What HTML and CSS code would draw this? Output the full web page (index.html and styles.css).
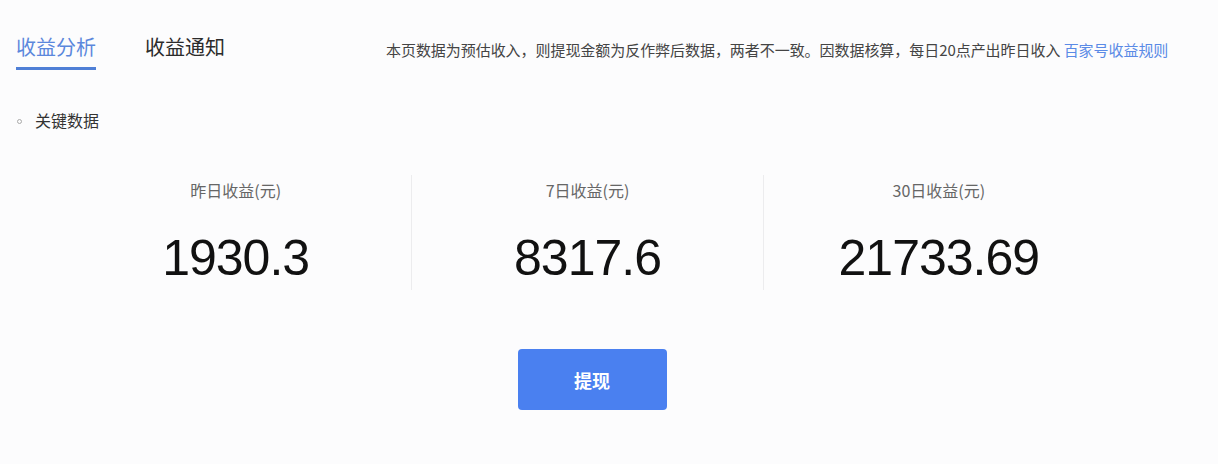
FILE: index.html
```html
<!DOCTYPE html>
<html lang="zh-CN">
<head>
<meta charset="utf-8">
<title>收益分析</title>
<link rel="stylesheet" href="styles.css">
</head>
<body>
<div class="page">
  <header class="header">
    <nav class="tabs">
      <div class="tab tab-active">收益分析</div>
      <div class="tab">收益通知</div>
    </nav>
    <p class="notice">本页数据为预估收入，则提现金额为反作弊后数据，两者不一致。因数据核算，每日20点产出昨日收入 <a class="notice-link" href="#">百家号收益规则</a></p>
  </header>

  <div class="section-title"><span class="dot"></span>关键数据</div>

  <div class="stats">
    <div class="stat">
      <div class="stat-label">昨日收益(元)</div>
      <div class="stat-value">1930.3</div>
    </div>
    <div class="stat">
      <div class="stat-label">7日收益(元)</div>
      <div class="stat-value">8317.6</div>
    </div>
    <div class="stat">
      <div class="stat-label">30日收益(元)</div>
      <div class="stat-value">21733.69</div>
    </div>
  </div>

  <div class="actions">
    <button class="btn-withdraw">提现</button>
  </div>
</div>
</body>
</html>
```

FILE: styles.css
```css
html, body {
  margin: 0;
  padding: 0;
  background: #fcfcfd;
}

body {
  font-family: "Liberation Sans", "Noto Sans CJK SC", sans-serif;
  color: #333;
}

.page {
  width: 1218px;
  height: 464px;
  overflow: hidden;
}

.header {
  display: flex;
  align-items: flex-start;
  padding-left: 16px;
  height: 70px;
}

.tabs {
  display: flex;
  gap: 49px;
}

.tab {
  font-size: 20px;
  line-height: 26px;
  padding-top: 34px;
  padding-bottom: 7px;
  border-bottom: 3px solid transparent;
  color: #2b2b2b;
  font-family: "Noto Sans CJK SC", sans-serif;
}

.tab-active {
  color: #5b87dc;
  border-bottom-color: #4f7fd6;
}

.notice {
  margin: 0 0 0 161px;
  padding-top: 40px;
  font-size: 15px;
  line-height: 20px;
  color: #444;
  font-family: "Noto Sans CJK SC", sans-serif;
  white-space: nowrap;
  letter-spacing: -0.05px;
}

.notice-link {
  color: #5a8ae6;
  text-decoration: none;
}

.section-title {
  display: flex;
  align-items: center;
  margin-top: 39px;
  padding-left: 17px;
  font-size: 16px;
  line-height: 22px;
  color: #333;
  font-family: "Noto Sans CJK SC", sans-serif;
}

.dot {
  width: 3px;
  height: 3px;
  border: 1px solid #aaa;
  border-radius: 50%;
  margin-right: 13px;
  margin-top: 2px;
}

.stats {
  display: grid;
  grid-template-columns: repeat(3, 1fr);
  margin: 44px 0 0 60px;
  width: 1054px;
}

.stat {
  display: flex;
  flex-direction: column;
  align-items: center;
  height: 115px;
  padding-top: 4px;
  box-sizing: border-box;
}

.stat + .stat {
  border-left: 1px solid #ececee;
}

.stat-label {
  font-size: 16px;
  line-height: 22px;
  color: #666;
  font-family: "Noto Sans CJK SC", sans-serif;
}

.stat-value {
  margin-top: 27px;
  font-size: 50px;
  line-height: 60px;
  letter-spacing: -1px;
  color: #111;
  font-family: "Liberation Sans", sans-serif;
}

.actions {
  display: flex;
  justify-content: center;
  width: 1054px;
  margin: 59px 0 0 65px;
}

.btn-withdraw {
  width: 149px;
  height: 61px;
  border: none;
  border-radius: 4px;
  background: #4a80f0;
  color: #fff;
  font-size: 18px;
  font-weight: bold;
  font-family: "Noto Sans CJK SC", sans-serif;
  cursor: pointer;
}
```
